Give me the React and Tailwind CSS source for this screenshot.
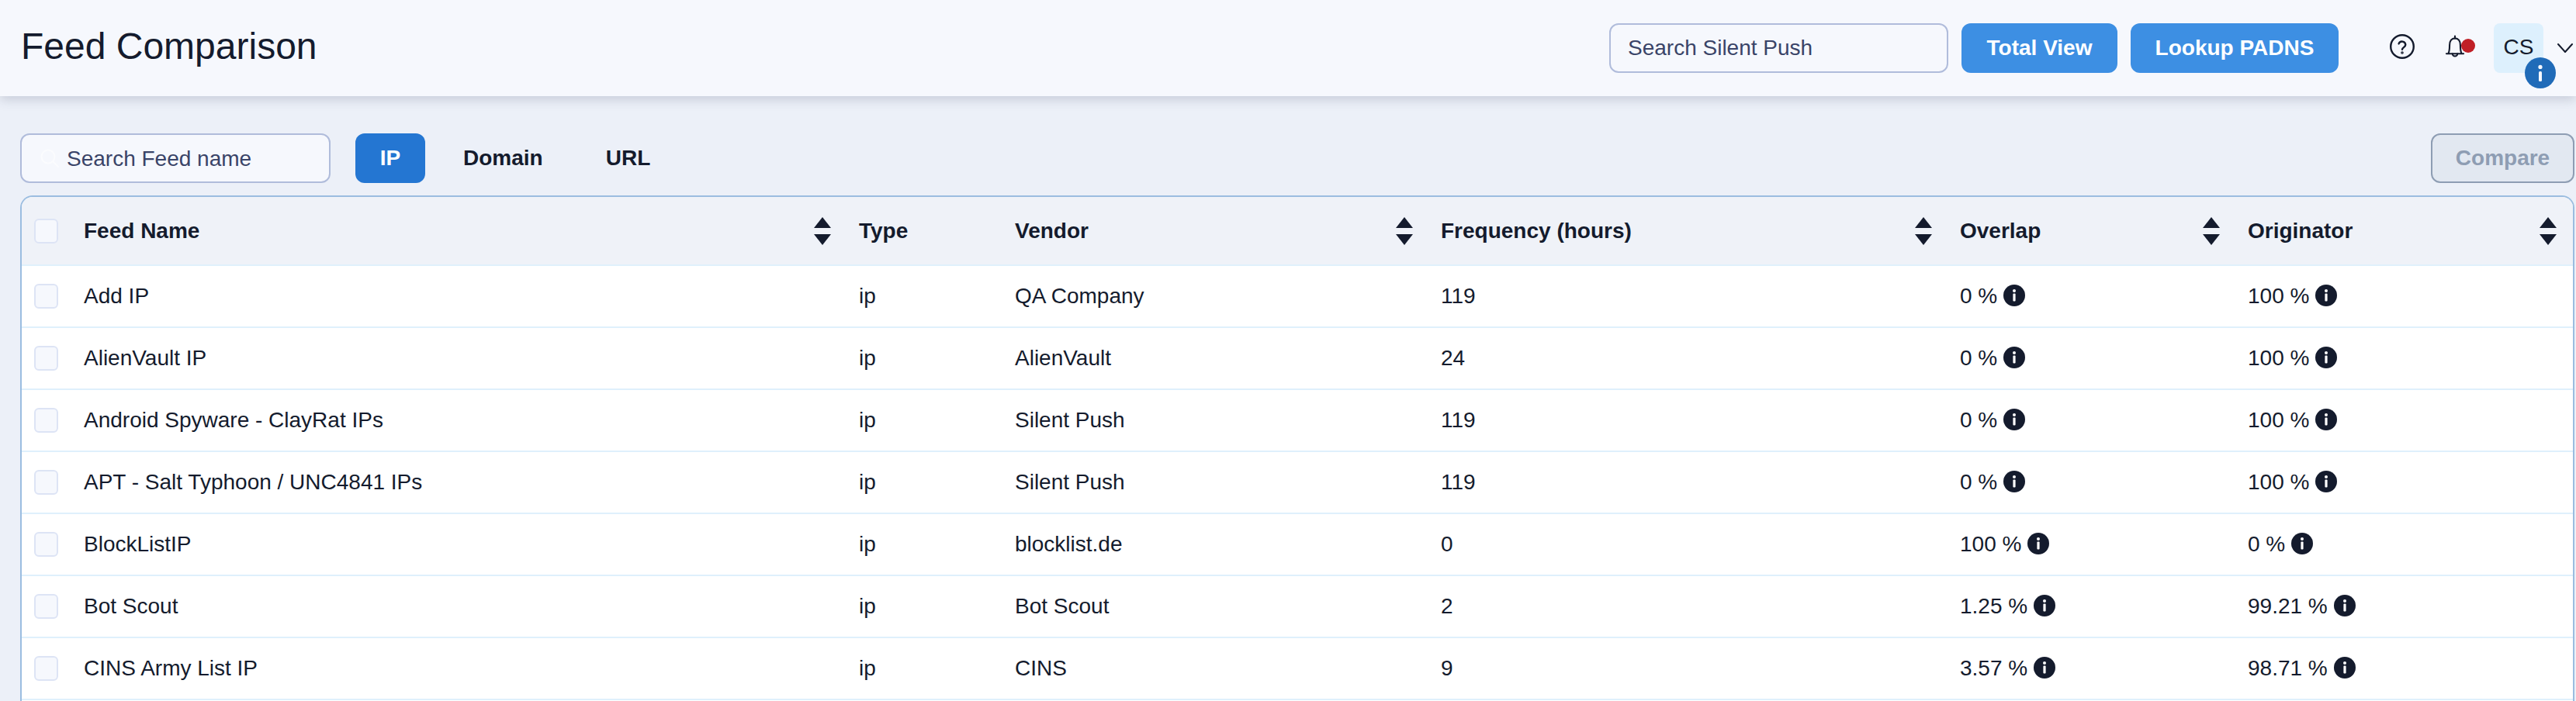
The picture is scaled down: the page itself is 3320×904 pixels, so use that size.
import React from "react";

const rows = [
  ["Add IP", "ip", "QA Company", "119", "0 %", "100 %"],
  ["AlienVault IP", "ip", "AlienVault", "24", "0 %", "100 %"],
  ["Android Spyware - ClayRat IPs", "ip", "Silent Push", "119", "0 %", "100 %"],
  ["APT - Salt Typhoon / UNC4841 IPs", "ip", "Silent Push", "119", "0 %", "100 %"],
  ["BlockListIP", "ip", "blocklist.de", "0", "100 %", "0 %"],
  ["Bot Scout", "ip", "Bot Scout", "2", "1.25 %", "99.21 %"],
  ["CINS Army List IP", "ip", "CINS", "9", "3.57 %", "98.71 %"],
];

function Sort() {
  return (
    <svg width="22" height="36" viewBox="0 0 22 36" className="shrink-0" fill="#141b2d">
      <path d="M11 0 L22 14 L0 14 Z" />
      <path d="M0 22 L22 22 L11 36 Z" />
    </svg>
  );
}

function Info() {
  return (
    <svg width="28" height="28" viewBox="0 0 28 28" className="shrink-0 ml-2 -mt-[2px]">
      <circle cx="14" cy="14" r="14" fill="#141b2d" />
      <rect x="12.4" y="11.5" width="3.2" height="10" rx="1" fill="#fff" />
      <circle cx="14" cy="8" r="2" fill="#fff" />
    </svg>
  );
}

function Check() {
  return <span className="block w-[31px] h-8 rounded-md border-2 border-[#dde4f5] bg-[#f6f8fd]" />;
}

function Th({ label, last }) {
  return (
    <th className={`p-0 text-left font-bold ${last ? "pr-[21px]" : "pr-9"}`}>
      <div className="flex items-center justify-between">
        <span>{label}</span>
        <Sort />
      </div>
    </th>
  );
}

function Pct({ v }) {
  return (
    <td className="p-0">
      <div className="flex items-center">
        <span>{v}</span>
        <Info />
      </div>
    </td>
  );
}

export default function App() {
  return (
    <div className="h-[904px] overflow-hidden bg-[#ecf0f8] text-[#141b2d] font-['Liberation_Sans',sans-serif]">
      <header className="h-[124px] bg-[#f6f8fd] shadow-[0_4px_14px_rgba(60,70,100,0.22)] flex items-center justify-between pl-[27px] pr-1 relative">
        <h1 className="text-[48px] font-normal leading-none -mt-1">Feed Comparison</h1>
        <div className="flex items-center">
          <div className="w-[437px] h-16 rounded-xl border-2 border-[#b0bcdb] bg-[#f6f8fd] flex items-center pl-[22px] text-[28px] text-[#3a4468]">
            Search Silent Push
          </div>
          <button className="ml-[17px] w-[201px] h-16 rounded-xl bg-[#3d8fe3] text-white font-bold text-[28px]">Total View</button>
          <button className="ml-[17px] w-[268px] h-16 rounded-xl bg-[#3d8fe3] text-white font-bold text-[28px]">Lookup PADNS</button>
          <svg className="ml-[66px] -mt-1" width="32" height="32" viewBox="0 0 32 32" fill="none" stroke="#141b2d" strokeWidth="2.4" strokeLinecap="round">
            <circle cx="16" cy="16" r="14.8" />
            <path d="M11.6 12.4a4.5 4.5 0 0 1 8.7 1.4c0 3-4.3 3.6-4.3 6" />
            <circle cx="16" cy="24" r="0.6" fill="#141b2d" />
          </svg>
          <div className="relative ml-10 w-[38px] h-8 -mt-1">
            <svg width="24" height="32" viewBox="0 0 26 32" fill="none" stroke="#141b2d" strokeWidth="2.3" strokeLinecap="round" strokeLinejoin="round">
              <path d="M1 26 H25 M3.5 26 C5.5 23 5.5 20 5.5 14 C5.5 8 8.5 4.5 13 4.5 C17.5 4.5 20.5 8 20.5 14 C20.5 20 20.5 23 22.5 26" />
              <path d="M13 1.5 V4.5 M9.5 26 A3.5 3.5 0 0 0 16.5 26" />
            </svg>
            <span className="absolute left-5 top-[6px] w-[18px] h-[18px] rounded-full bg-[#c01f26]" />
          </div>
          <div className="relative ml-6 w-16 h-16 rounded-lg bg-[#ddf0fd] flex items-center justify-center pb-[2px] text-[28px]">
            CS
            <span className="absolute left-10 top-11 w-10 h-10 rounded-full bg-[#206bb8] flex items-center justify-center">
              <svg width="6" height="22" viewBox="0 0 6 22" fill="#f6f8fd">
                <circle cx="3" cy="3.4" r="2.6" />
                <rect x="1" y="9" width="4" height="13" rx="1.5" />
              </svg>
            </span>
          </div>
          <svg className="ml-[18px]" width="20" height="12" viewBox="0 0 20 12" fill="none" stroke="#141b2d" strokeWidth="2" strokeLinecap="round" strokeLinejoin="round">
            <path d="M1 1 L10 11 L19 1" />
          </svg>
        </div>
      </header>

      <main className="pl-[26px] pr-[2px] pt-12">
        <div className="flex items-center h-16">
          <div className="w-[400px] h-16 rounded-xl border-2 border-[#b0bcdb] bg-[#f6f8fd] flex items-center pl-6 gap-[10px] text-[28px] text-[#3a4468]">
            <svg width="24" height="24" viewBox="0 0 24 24" fill="none" stroke="#fbfcfe" strokeWidth="2" strokeLinecap="round">
              <circle cx="10" cy="10" r="8.5" />
              <path d="M16.5 16.5 L23 23" />
            </svg>
            <span className="mt-[2px]">Search Feed name</span>
          </div>
          <button className="ml-[32px] w-[90px] h-16 rounded-xl bg-[#2476d2] text-white font-bold text-[28px]">IP</button>
          <button className="ml-[49px] font-bold text-[28px]">Domain</button>
          <button className="ml-[81px] font-bold text-[28px]">URL</button>
          <button className="ml-auto w-[185px] h-16 rounded-xl border-2 border-[#8e9db3] bg-[#e2e8f1] text-[#8e9db3] font-bold text-[28px]">Compare</button>
        </div>

        <div className="mt-4 rounded-t-2xl border-2 border-b-0 border-[#9bbde0] bg-white overflow-hidden h-[700px]">
          <table className="table-fixed w-[3288px] border-collapse text-[28px]">
            <colgroup>
              <col className="w-[80px]" />
              <col className="w-[999px]" />
              <col className="w-[201px]" />
              <col className="w-[549px]" />
              <col className="w-[669px]" />
              <col className="w-[371px]" />
              <col className="w-[419px]" />
            </colgroup>
            <thead>
              <tr className="h-[88px] bg-[#eff2f8] border-b-2 border-[#dff0fc]">
                <th className="p-0 pl-4"><Check /></th>
                <Th label="Feed Name" />
                <th className="p-0 text-left font-bold">Type</th>
                <Th label="Vendor" />
                <Th label="Frequency (hours)" />
                <Th label="Overlap" />
                <Th label="Originator" last />
              </tr>
            </thead>
            <tbody>
              {rows.map((r) => (
                <tr key={r[0]} className="h-[80px] border-b-2 border-[#dff0fc]">
                  <td className="p-0 pl-4"><Check /></td>
                  <td className="p-0">{r[0]}</td>
                  <td className="p-0">{r[1]}</td>
                  <td className="p-0">{r[2]}</td>
                  <td className="p-0">{r[3]}</td>
                  <Pct v={r[4]} />
                  <Pct v={r[5]} />
                </tr>
              ))}
            </tbody>
          </table>
        </div>
      </main>
    </div>
  );
}
